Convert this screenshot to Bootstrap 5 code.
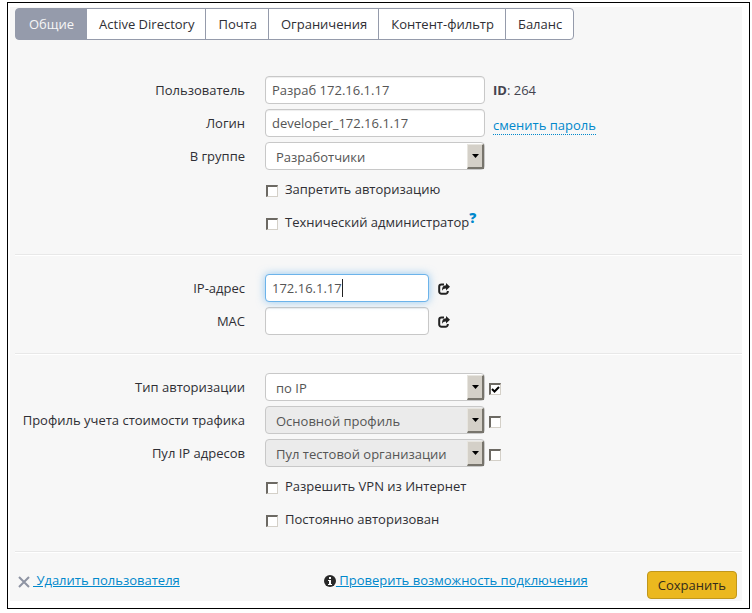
<!DOCTYPE html>
<html lang="ru">
<head>
<meta charset="utf-8">
<meta name="viewport" content="width=device-width, initial-scale=1">
<title>Пользователь</title>
<link href="https://cdn.jsdelivr.net/npm/bootstrap@5.3.0/dist/css/bootstrap.min.css" rel="stylesheet">
<style>
body { font: 13px/20px "Open Sans", "Noto Sans", sans-serif; color: #2f2f35; background: #fff; padding: 2px 2px 4px 7px; }
.frame { border: 1px solid #000; padding: 4px 7px 7px 2px; }
.panel { background: #f7f7f7; padding: 1px 0 2px 5px; }
.tabs .btn { --bs-btn-font-size: 13px; --bs-btn-line-height: 30px; --bs-btn-padding-x: 12px; --bs-btn-padding-y: 0; --bs-btn-border-radius: 4px;
  --bs-btn-color: #2f2f35; --bs-btn-bg: #fff; --bs-btn-border-color: #959bab; --bs-btn-hover-bg: #eceef2; --bs-btn-hover-border-color: #959bab;
  --bs-btn-active-bg: #959bab; --bs-btn-active-color: #f7f7f7; --bs-btn-active-border-color: #959bab; flex: 0 0 auto; padding-right: 11px; }
.tabs .btn:first-child { padding: 0 12px 0 13px; }
.form-body { padding-top: 36px; }
.stack { display: flex; flex-direction: column; gap: 5px; }
.line { display: flex; align-items: center; min-height: 28px; }
.cap { flex: 0 0 230px; margin-right: 20px; text-align: right; }
.line.tick { padding-left: 250px; }
.rule { height: 2px; background: #fff; border-top: 1px solid #e8e8e8; margin: 18px 0; }
.panel .form-control, .panel .form-select { height: 28px; font-size: 13px; line-height: 20px; color: #555; border: 1px solid #c8c8c8; border-radius: 4px; background-color: #fff; background-image: none; padding: 3px 6px; }
.panel .form-control { box-shadow: inset 0 1px 1px rgba(0,0,0,.07); }
.panel .form-select { padding: 4px 20px 2px 10px; }
.panel .form-select:disabled { background-color: #ebebeb; }
.wide { width: 220px; flex: none; }
.short { width: 164px; flex: none; }
.panel .form-control.current { border-color: #6cb3ea; box-shadow: 0 0 8px rgba(82,168,236,.6); }
.caret { position: absolute; left: 77px; top: 5px; width: 1px; height: 18px; background: #222; }
.drop::after { content: ""; position: absolute; top: 2px; right: 1px; bottom: 1px; width: 17px; background: #d4d0c8; pointer-events: none;
  border: solid; border-width: 1px 2px 2px 1px; border-color: #e8e6e0 #77746c #77746c #e8e6e0; }
.drop svg { position: absolute; right: 6px; top: 12px; z-index: 1; pointer-events: none; }
.box { appearance: none; flex: none; width: 12px; height: 12px; margin: 4px 7px 0 1px; background: #fff; border: solid; border-width: 2px 1px 1px 2px; border-color: #6c6963 #d4d0c8 #d4d0c8 #6c6963; }
.drop + .box { margin-left: 4px; }
.box:checked { background: #fff url("data:image/svg+xml,%3Csvg xmlns='http://www.w3.org/2000/svg' viewBox='0 0 9 9'%3E%3Cpath d='M1 4l2.5 2.5L8 2' fill='none' stroke='%23000' stroke-width='2'/%3E%3C/svg%3E") center/9px 9px no-repeat; }
.panel a { color: #0088cc; }
.panel .pass { text-decoration: none; border-bottom: 1px dotted #0088cc; line-height: 17px; margin-top: 5px; }
.side { margin-left: 8px; color: #44444f; }
.help { font-size: 14px; font-weight: 800; text-decoration: none; align-self: flex-start; }
.icon-btn { border: 0; background: none; padding: 2px 0 0; margin-left: 9px; color: #222; display: flex; }
.second { padding-left: 6px; }
.foot svg { flex: none; }
.foot a { line-height: 18px; }
.remove { margin: 4px 3px 0; }
.save { --bs-btn-font-size: 13px; --bs-btn-line-height: 26px; --bs-btn-padding-x: 10px; --bs-btn-padding-y: 0; --bs-btn-border-radius: 4px;
  --bs-btn-bg: #ebb81f; --bs-btn-border-color: #c0971c; --bs-btn-color: #332b1c; --bs-btn-hover-bg: #dcab17; --bs-btn-hover-border-color: #b08810; margin-right: 5px; }
</style>
</head>
<body>
<svg class="d-none" aria-hidden="true">
  <symbol id="share" viewBox="0 0 12 12"><path d="M6 1.5H3.5a2.3 2.3 0 0 0-2.3 2.3v4.7a2.3 2.3 0 0 0 2.3 2.3h4a2.3 2.3 0 0 0 2.3-2.3V8" fill="none" stroke="currentColor" stroke-width="2"/><path d="M8 0l4 3.800-4 3.700V5.400C6.200 5.300 5 6 4.200 7.800 3.800 4.500 5 2.300 8 2.200z" fill="currentColor"/></symbol>
  <symbol id="down" viewBox="0 0 7 4"><path d="M0 0h7L3.500 4z"/></symbol>
</svg>
<main class="frame">
<form class="panel">
  <div class="btn-group tabs d-flex" role="group" aria-label="Разделы">
    <button type="button" class="btn active">Общие</button>
    <button type="button" class="btn">Active Directory</button>
    <button type="button" class="btn">Почта</button>
    <button type="button" class="btn">Ограничения</button>
    <button type="button" class="btn">Контент-фильтр</button>
    <button type="button" class="btn">Баланс</button>
  </div>
  <div class="form-body">
    <div class="stack">
      <div class="line"><label class="cap" for="user">Пользователь</label><input id="user" class="form-control wide" value="Разраб 172.16.1.17"><span class="side"><b>ID</b>: 264</span></div>
      <div class="line"><label class="cap" for="login">Логин</label><input id="login" class="form-control wide" value="developer_172.16.1.17"><a class="side pass" href="#">сменить пароль</a></div>
      <div class="line"><label class="cap" for="group">В группе</label><div class="drop wide position-relative"><select id="group" class="form-select"><option>Разработчики</option></select><svg width="7" height="4"><use href="#down"/></svg></div></div>
      <div class="line tick"><input type="checkbox" class="box" id="deny"><label for="deny">Запретить авторизацию</label></div>
      <div class="line tick"><input type="checkbox" class="box" id="tech"><label for="tech">Технический администратор</label><a class="help" href="#">?</a></div>
    </div>
    <div class="rule"></div>
    <div class="stack">
      <div class="line"><label class="cap" for="ip">IP-адрес</label><div class="short position-relative"><input id="ip" class="form-control current" value="172.16.1.17"><span class="caret"></span></div><button type="button" class="icon-btn" aria-label="Выбрать IP-адрес"><svg width="12" height="12"><use href="#share"/></svg></button></div>
      <div class="line"><label class="cap" for="mac">MAC</label><input id="mac" class="form-control short"><button type="button" class="icon-btn" aria-label="Выбрать MAC"><svg width="12" height="12"><use href="#share"/></svg></button></div>
    </div>
    <div class="rule"></div>
    <div class="stack">
      <div class="line"><label class="cap" for="auth">Тип авторизации</label><div class="drop wide position-relative"><select id="auth" class="form-select"><option>по IP</option></select><svg width="7" height="4"><use href="#down"/></svg></div><input type="checkbox" class="box" aria-label="Задать тип авторизации" checked></div>
      <div class="line"><label class="cap" for="profile">Профиль учета стоимости трафика</label><div class="drop wide position-relative"><select id="profile" class="form-select" disabled><option>Основной профиль</option></select><svg width="7" height="4"><use href="#down"/></svg></div><input type="checkbox" class="box" aria-label="Задать профиль"></div>
      <div class="line"><label class="cap" for="pool">Пул IP адресов</label><div class="drop wide position-relative"><select id="pool" class="form-select" disabled><option>Пул тестовой организации</option></select><svg width="7" height="4"><use href="#down"/></svg></div><input type="checkbox" class="box" aria-label="Задать пул"></div>
      <div class="line tick"><input type="checkbox" class="box" id="vpn"><label for="vpn">Разрешить VPN из Интернет</label></div>
      <div class="line tick"><input type="checkbox" class="box" id="always"><label for="always">Постоянно авторизован</label></div>
    </div>
    <div class="rule"></div>
    <div class="row g-0 foot">
      <div class="col-5 d-flex align-items-start"><svg class="remove" width="12" height="14" viewBox="0 0 12 14"><path d="M1 2l10 10M11 2L1 12" stroke="#8e94a3" stroke-width="2"/></svg><a href="#">&nbsp;Удалить пользователя</a></div>
      <div class="col d-flex align-items-start second"><svg class="mt-1" width="12" height="12" viewBox="0 0 12 12"><circle cx="6" cy="6" r="6" fill="#292929"/><path d="M5 2h2v2H5zM4 5h3v4h1v1H4V9h1V6H4z" fill="#fff"/></svg><a href="#">&nbsp;Проверить возможность подключения</a></div>
      <div class="col-auto"><button type="submit" class="btn save">Сохранить</button></div>
    </div>
  </div>
</form>
</main>
<script src="https://cdn.jsdelivr.net/npm/bootstrap@5.3.0/dist/js/bootstrap.bundle.min.js"></script>
</body>
</html>
